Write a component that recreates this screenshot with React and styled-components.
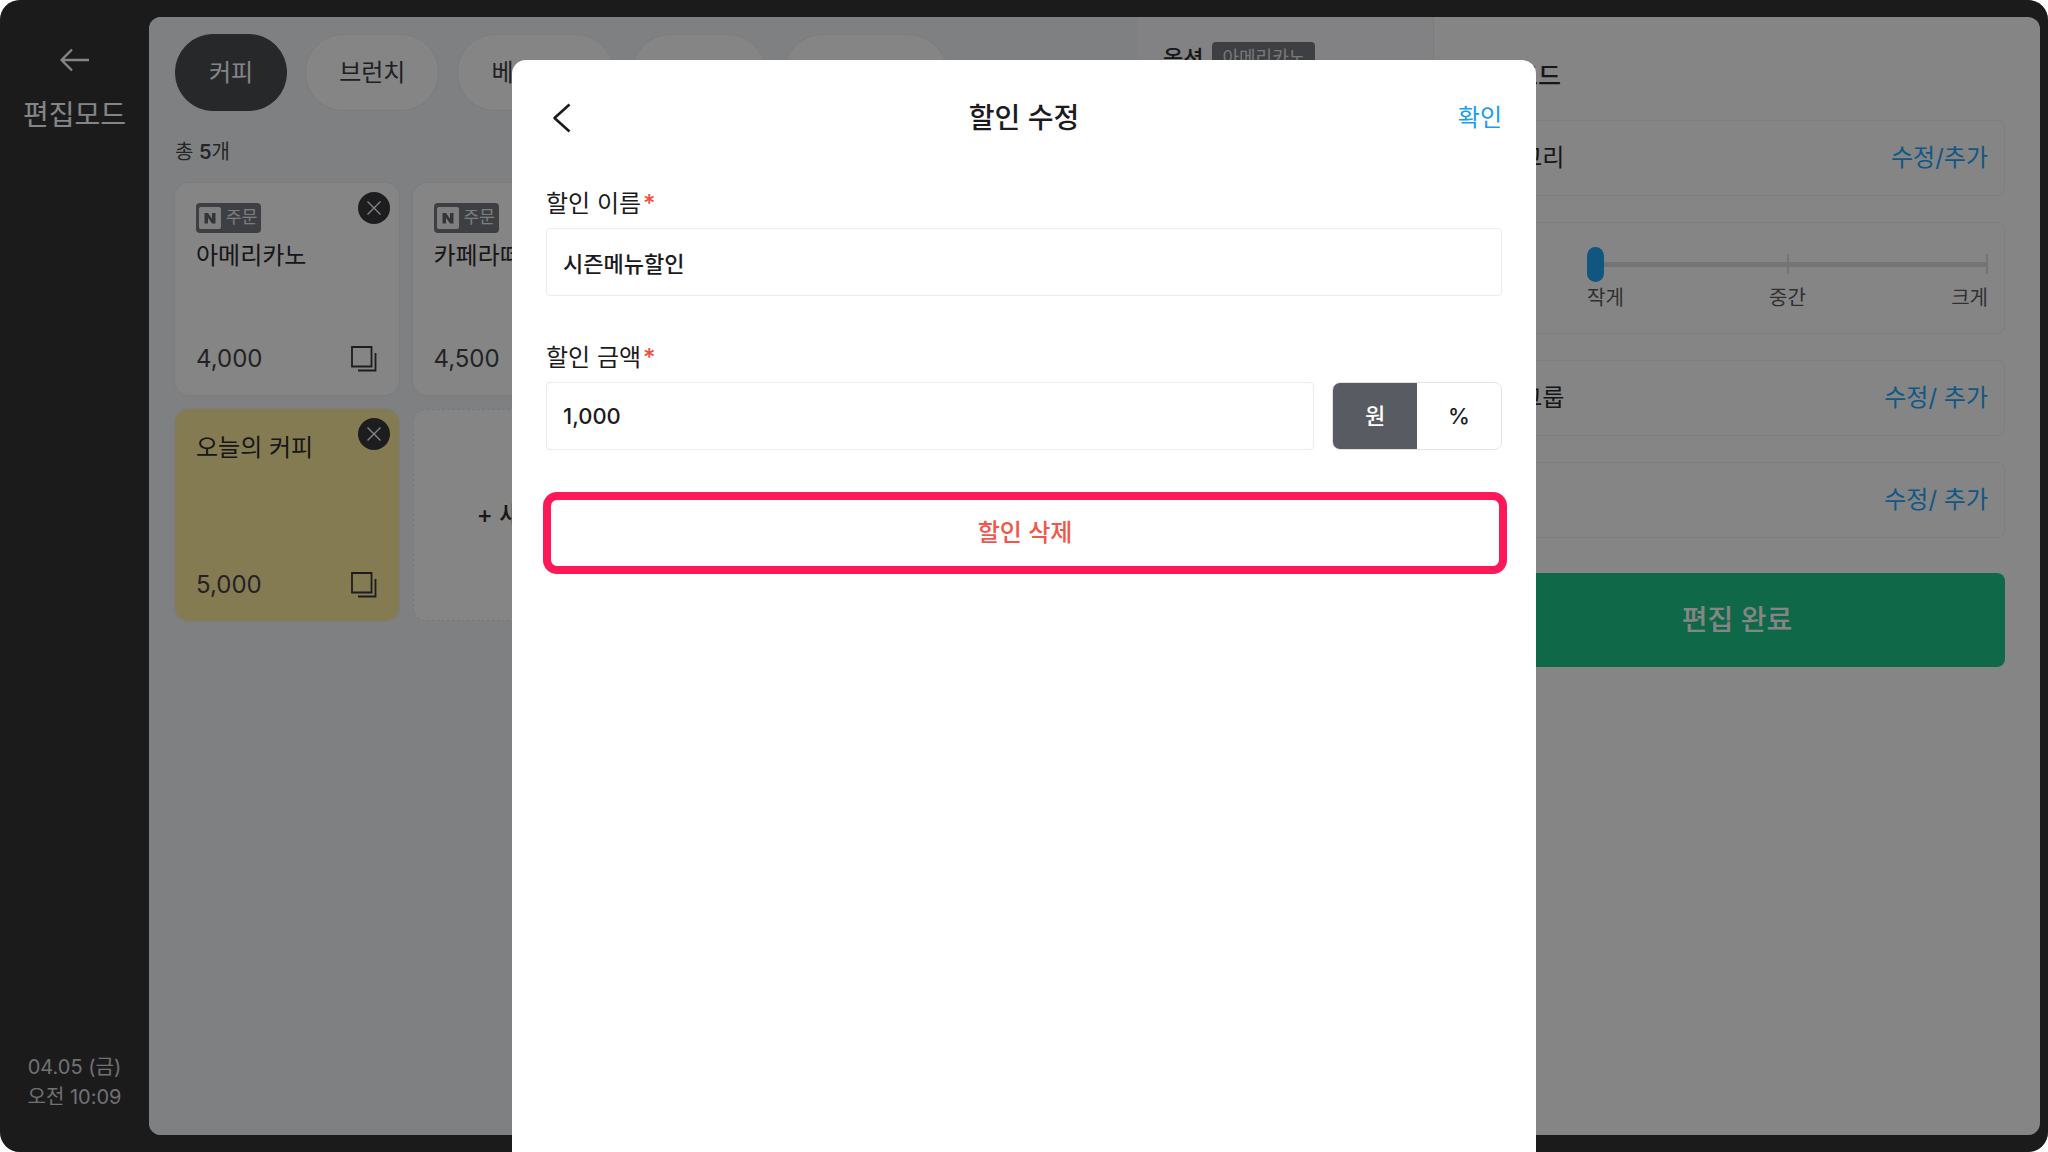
import { useState } from "react";
import styled, { createGlobalStyle } from "styled-components";

const GlobalStyle = createGlobalStyle`
  * {
    box-sizing: border-box;
    margin: 0;
    padding: 0;
  }

  body {
    background: #fff;
    font-family: Inter, "Noto Sans CJK KR", sans-serif;
    line-height: 1.5;
    color: #2c2c2f;
  }

  button,
  input {
    font: inherit;
    color: inherit;
    border: none;
    background: none;
  }

  button {
    cursor: pointer;
  }
`;

const Device = styled.div`
  position: relative;
  display: grid;
  grid-template-columns: 149px 1fr;
  height: 100vh;
  padding: 17px 8px 17px 0;
  background: #353537;
  border-radius: 20px;
  overflow: hidden;
`;

/* Sidebar */
const Sidebar = styled.nav`
  display: flex;
  flex-direction: column;
  align-items: center;
  padding: 24px 0 23px;
  color: #fff;
`;

const BackButton = styled.button`
  display: flex;
  padding: 4px;
`;

const ModeName = styled.p`
  margin-top: 16px;
  font-size: 28px;
  line-height: 40px;
`;

const Clock = styled.p`
  margin-top: auto;
  font-size: 20px;
  line-height: 30px;
  text-align: center;
  color: #d8d8dc;
`;

/* Main sheet */
const Sheet = styled.main`
  display: grid;
  grid-template-columns: 989fr 296fr 606fr;
  min-width: 0;
  border-radius: 12px;
  background: #fff;
  overflow: hidden;
`;

const MenuPanel = styled.section`
  min-width: 0;
  padding: 17px 27px 0 26px;
  background: #f4f6fa;
`;

const Tabs = styled.div`
  display: flex;
  gap: 18px;
`;

const Tab = styled.button`
  height: 77px;
  padding: 0 33px;
  border: 1px solid ${(props) => (props.$active ? "#4c4e52" : "#e9ebef")};
  border-radius: 38px;
  font-size: 24px;
  white-space: nowrap;
  color: ${(props) => (props.$active ? "#fff" : "#3c3d42")};
  background: ${(props) => (props.$active ? "#4c4e52" : "#fff")};
`;

const Total = styled.p`
  margin: 26px 0 16px;
  font-size: 20px;
  line-height: 30px;
  color: #48484d;

  strong {
    font-weight: 600;
  }
`;

const MenuGrid = styled.div`
  display: grid;
  grid-template-columns: repeat(4, 1fr);
  grid-auto-rows: 212px;
  gap: 14px;
`;

const Card = styled.article`
  position: relative;
  display: flex;
  flex-direction: column;
  padding: 20px 21px 18px;
  border-radius: 14px;
  background: ${(props) => (props.$yellow ? "#ffeba0" : "#fff")};
  box-shadow: 0 0 2px 1px #e9ebef;
`;

const OrderBadge = styled.span`
  display: flex;
  align-items: center;
  gap: 5px;
  align-self: flex-start;
  height: 30px;
  padding: 0 4px 0 3px;
  border-radius: 4px;
  font-size: 17px;
  color: #f0f0f2;
  background: #777a81;
`;

const CardName = styled.h3`
  font-size: 24px;
  font-weight: 400;
  line-height: 36px;
  margin-top: ${(props) => (props.$hasBadge ? "5px" : "1px")};
`;

const CardFooter = styled.div`
  display: flex;
  align-items: center;
  justify-content: space-between;
  margin-top: auto;
  font-size: 24px;
  line-height: 36px;
  color: #444448;
`;

const CopyButton = styled.button`
  display: flex;
  padding: 0 1px;
`;

const RemoveButton = styled.button`
  position: absolute;
  top: 9px;
  right: 9px;
  display: flex;
  align-items: center;
  justify-content: center;
  width: 32px;
  height: 32px;
  border-radius: 50%;
  background: #38383c;
`;

const AddCard = styled.button`
  border: 1px dashed #e2e4e8;
  border-radius: 14px;
  font-size: 24px;
  font-weight: 500;
  background: #fff;
`;

/* Option column */
const OptionPanel = styled.section`
  min-width: 0;
  padding: 25px 25px 0;
  background: #fafafd;
  border-right: 1px solid #ededf0;
`;

const OptionHead = styled.div`
  display: flex;
  align-items: center;
  gap: 9px;
  height: 32px;
`;

const OptionTitle = styled.h2`
  font-size: 22px;
  font-weight: 500;
`;

const OptionTag = styled.span`
  padding: 0 10px;
  border-radius: 4px;
  font-size: 18px;
  line-height: 32px;
  color: #e3e4e8;
  background: #777a81;
`;

/* Edit settings column */
const SettingsPanel = styled.section`
  min-width: 0;
  padding: 39px 35px 0;
`;

const SettingsTitle = styled.h2`
  font-size: 25px;
  font-weight: 500;
  line-height: 40px;
  margin-bottom: 24px;
`;

const SettingBox = styled.div`
  display: flex;
  align-items: center;
  justify-content: space-between;
  height: ${(props) => (props.$tall ? "112px" : "76px")};
  margin-bottom: 26px;
  padding: 0 16px 0 6px;
  border: 1px solid #f2f2f4;
  border-radius: 8px;
  font-size: 24px;
`;

const EditLink = styled.a`
  color: #1ea8ff;
  text-decoration: none;
`;

const SizeControl = styled.label`
  display: block;
  width: 401px;
  padding-top: 3px;
`;

const SizeRange = styled.input`
  display: block;
  appearance: none;
  width: 100%;
  height: 36px;
  background:
    linear-gradient(#dedee1, #dedee1) center / 100% 5px no-repeat,
    linear-gradient(#dedee1, #dedee1) center / 2px 20px no-repeat,
    linear-gradient(#dedee1, #dedee1) right center / 2px 20px no-repeat;

  &::-webkit-slider-thumb {
    appearance: none;
    width: 17px;
    height: 35px;
    border-radius: 9px;
    background: #20a5f5;
  }
`;

const SizeNames = styled.span`
  display: flex;
  justify-content: space-between;
  margin-top: 1px;
  font-size: 20px;
  line-height: 30px;
  color: #5c5c62;
`;

const DoneButton = styled.button`
  width: 100%;
  height: 94px;
  margin-top: 9px;
  border-radius: 8px;
  font-size: 28px;
  font-weight: 500;
  color: #fff;
  background: #1dc88a;
`;

/* Discount dialog */
const Backdrop = styled.div`
  position: absolute;
  inset: 0;
  display: flex;
  justify-content: center;
  padding-top: 60px;
  background: rgba(0, 0, 0, 0.48);
`;

const Dialog = styled.section`
  width: 50%;
  padding: 0 34px;
  border-radius: 14px 14px 0 0;
  color: #1b1b1e;
  background: #fff;
`;

const DialogHeader = styled.header`
  display: grid;
  grid-template-columns: 1fr auto 1fr;
  align-items: center;
  height: 116px;
  margin-bottom: 12px;
`;

const DialogTitle = styled.h1`
  font-size: 28px;
  font-weight: 500;
`;

const PrevButton = styled.button`
  display: flex;
  justify-self: start;
  padding: 4px;
`;

const ConfirmButton = styled.button`
  justify-self: end;
  font-size: 24px;
  color: #1c9cf0;
`;

const Field = styled.div`
  margin-bottom: 46px;
`;

const FieldLabel = styled.label`
  display: block;
  margin-bottom: 8px;
  font-size: 24px;
  line-height: 32px;
`;

const Required = styled.span`
  margin-left: 2px;
  font-weight: 500;
  color: #f04e3e;
`;

const FieldRow = styled.div`
  display: flex;
  gap: 18px;
`;

const TextInput = styled.input`
  flex: 1;
  min-width: 0;
  height: 68px;
  padding: 0 16px;
  border: 1px solid #e9ebed;
  border-radius: 4px;
  font-size: 22px;
  font-weight: 500;
  line-height: 32px;
  outline: none;
`;

const UnitToggle = styled.div`
  display: grid;
  grid-template-columns: 1fr 1fr;
  width: 170px;
  height: 68px;
  border: 1px solid #e1e2e5;
  border-radius: 8px;
  overflow: hidden;
`;

const UnitButton = styled.button`
  font-size: 22px;
  font-weight: 500;
  color: ${(props) => (props.$active ? "#fff" : "#1b1b1e")};
  background: ${(props) => (props.$active ? "#585b61" : "#fff")};
`;

const DeleteRow = styled.div`
  display: flex;
  margin: -4px -5px 0 -3px;
`;

const DeleteButton = styled.button`
  flex: 1;
  height: 82px;
  border: 8px solid #ff1857;
  border-radius: 14px;
  font-size: 24px;
  font-weight: 500;
  color: #f0564c;
`;

function ArrowLeft() {
  return (
    <svg width="30" height="30" viewBox="0 0 30 30" fill="none" stroke="#fff" strokeWidth="2.4">
      <path d="M1.5 15H29M12 4.5L1.5 15L12 25.5" strokeLinejoin="round" />
    </svg>
  );
}

function ChevronLeft() {
  return (
    <svg width="24" height="30" viewBox="0 0 24 30" fill="none" stroke="#1b1b1e" strokeWidth="2.6">
      <path d="M19.5 1.5L4.5 15L19.5 28.5" strokeLinejoin="round" />
    </svg>
  );
}

function CloseIcon() {
  return (
    <svg width="14" height="14" viewBox="0 0 14 14" stroke="#fff" strokeWidth="1.4">
      <path d="M0.5 0.5L13.5 13.5M13.5 0.5L0.5 13.5" />
    </svg>
  );
}

function CopyIcon() {
  return (
    <svg width="26" height="26" viewBox="0 0 26 26" fill="none" stroke="#38383c" strokeWidth="1.8">
      <path d="M1 1H20.5V20.5H1ZM24.5 7V24.5H7" />
    </svg>
  );
}

function NaverMark() {
  return (
    <svg width="22" height="22" viewBox="0 0 22 22">
      <rect width="22" height="22" rx="2" fill="#f4f4f6" />
      <path d="M5.5 16.5V6H9L13 11.7V6H16.5V16.5H13L9 10.8V16.5Z" fill="#62666c" />
    </svg>
  );
}

const tabs = ["커피", "브런치", "베이커리", "에이드", "시즌 메뉴"];

const menus = [
  { name: "아메리카노", price: "4,000", order: true },
  { name: "카페라떼", price: "4,500", order: true },
  { name: "카푸치노", price: "4,500", order: true },
  { name: "바닐라라떼", price: "5,000", order: true },
  { name: "오늘의 커피", price: "5,000", yellow: true },
];

function MenuCard({ menu }) {
  const { name, price, order, yellow } = menu;

  return (
    <Card $yellow={yellow}>
      {order && (
        <OrderBadge>
          <NaverMark />
          주문
        </OrderBadge>
      )}
      <CardName $hasBadge={order}>{name}</CardName>
      <CardFooter>
        {price}
        <CopyButton aria-label="복사">
          <CopyIcon />
        </CopyButton>
      </CardFooter>
      <RemoveButton aria-label="삭제">
        <CloseIcon />
      </RemoveButton>
    </Card>
  );
}

function DiscountDialog() {
  const [name, setName] = useState("시즌메뉴할인");
  const [amount, setAmount] = useState("1,000");
  const [unit, setUnit] = useState("원");

  return (
    <Dialog role="dialog" aria-labelledby="discount-title">
      <DialogHeader>
        <PrevButton aria-label="이전">
          <ChevronLeft />
        </PrevButton>
        <DialogTitle id="discount-title">할인 수정</DialogTitle>
        <ConfirmButton>확인</ConfirmButton>
      </DialogHeader>

      <Field>
        <FieldLabel htmlFor="discount-name">
          할인 이름<Required>*</Required>
        </FieldLabel>
        <FieldRow>
          <TextInput
            id="discount-name"
            value={name}
            onChange={(e) => setName(e.target.value)}
          />
        </FieldRow>
      </Field>

      <Field>
        <FieldLabel htmlFor="discount-amount">
          할인 금액<Required>*</Required>
        </FieldLabel>
        <FieldRow>
          <TextInput
            id="discount-amount"
            value={amount}
            onChange={(e) => setAmount(e.target.value)}
          />
          <UnitToggle>
            {["원", "%"].map((item) => (
              <UnitButton
                key={item}
                $active={unit === item}
                onClick={() => setUnit(item)}
              >
                {item}
              </UnitButton>
            ))}
          </UnitToggle>
        </FieldRow>
      </Field>

      <DeleteRow>
        <DeleteButton>할인 삭제</DeleteButton>
      </DeleteRow>
    </Dialog>
  );
}

function App() {
  return (
    <>
      <GlobalStyle />
      <Device>
        <Sidebar>
          <BackButton aria-label="뒤로">
            <ArrowLeft />
          </BackButton>
          <ModeName>편집모드</ModeName>
          <Clock>
            04.05 (금)
            <br />
            오전 10:09
          </Clock>
        </Sidebar>

        <Sheet>
          <MenuPanel>
            <Tabs>
              {tabs.map((tab, i) => (
                <Tab key={tab} $active={i === 0}>
                  {tab}
                </Tab>
              ))}
            </Tabs>
            <Total>
              총 <strong>5</strong>개
            </Total>
            <MenuGrid>
              {menus.map((menu) => (
                <MenuCard key={menu.name} menu={menu} />
              ))}
              <AddCard>+ 새 메뉴</AddCard>
            </MenuGrid>
          </MenuPanel>

          <OptionPanel>
            <OptionHead>
              <OptionTitle>옵션</OptionTitle>
              <OptionTag>아메리카노</OptionTag>
            </OptionHead>
          </OptionPanel>

          <SettingsPanel>
            <SettingsTitle>편집모드</SettingsTitle>
            <SettingBox>
              카테고리
              <EditLink href="#category">수정/추가</EditLink>
            </SettingBox>
            <SettingBox $tall>
              크기
              <SizeControl>
                <SizeRange
                  type="range"
                  min="0"
                  max="2"
                  defaultValue="0"
                  aria-label="크기"
                />
                <SizeNames>
                  <span>작게</span>
                  <span>중간</span>
                  <span>크게</span>
                </SizeNames>
              </SizeControl>
            </SettingBox>
            <SettingBox>
              옵션그룹
              <EditLink href="#option-group">수정/ 추가</EditLink>
            </SettingBox>
            <SettingBox>
              할인
              <EditLink href="#discount">수정/ 추가</EditLink>
            </SettingBox>
            <DoneButton>편집 완료</DoneButton>
          </SettingsPanel>
        </Sheet>

        <Backdrop>
          <DiscountDialog />
        </Backdrop>
      </Device>
    </>
  );
}

export default App;
